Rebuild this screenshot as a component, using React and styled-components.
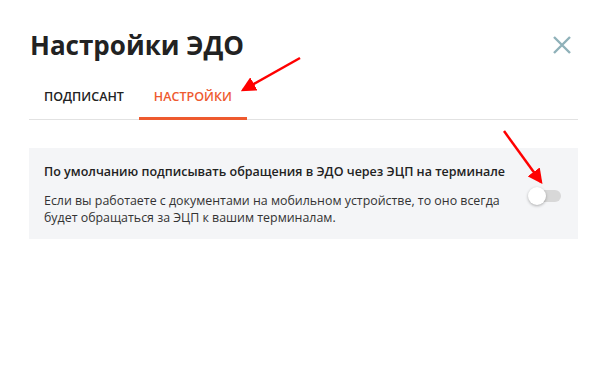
import React, { useState } from "react";
import styled, { createGlobalStyle } from "styled-components";

const colors = {
  TEXT: "#222222",
  ORANGE: "#EE5A2F",
  GREY_BG: "#F4F5F7",
  LINE: "#E2E2E2",
  CLOSE: "#8FB1B9",
  ARROW: "#FF0000",
};

const GlobalStyle = createGlobalStyle`
  html, body {
    margin: 0;
    padding: 0;
    background: #fff;
  }
  body {
    font-family: "Open Sans", "Noto Sans", sans-serif;
    color: ${colors.TEXT};
  }
`;

export default function App() {
  const [active, setActive] = useState("settings");
  const [checked, setChecked] = useState(false);

  return (
    <>
      <GlobalStyle />
      <Modal>
        <Header>
          <Title>Настройки ЭДО</Title>
          <Close aria-label="Закрыть">
            <svg width="20" height="20" viewBox="0 0 20 20">
              <path
                d="M2 2 L18 18 M18 2 L2 18"
                stroke={colors.CLOSE}
                strokeWidth="2.4"
                fill="none"
              />
            </svg>
          </Close>
        </Header>
        <Tabs>
          <Tab
            $active={active === "signer"}
            onClick={() => setActive("signer")}
          >
            Подписант
          </Tab>
          <Tab
            $active={active === "settings"}
            onClick={() => setActive("settings")}
          >
            Настройки
          </Tab>
        </Tabs>
        <Card>
          <CardText>
            <CardTitle>
              По умолчанию подписывать обращения в ЭДО через ЭЦП на терминале
            </CardTitle>
            <CardBody>
              Если вы работаете с документами на мобильном устройстве, то оно
              всегда будет обращаться за ЭЦП к вашим терминалам.
            </CardBody>
          </CardText>
          <Switch
            type="button"
            $on={checked}
            onClick={() => setChecked(!checked)}
          >
            <Knob $on={checked} />
          </Switch>
        </Card>
      </Modal>
      <Arrows width="605" height="377" viewBox="0 0 605 377">
        <defs>
          <marker
            id="head"
            markerWidth="6"
            markerHeight="6"
            refX="5"
            refY="3"
            orient="auto"
            markerUnits="strokeWidth"
          >
            <path d="M0 0 L6 3 L0 6 Z" fill={colors.ARROW} />
          </marker>
        </defs>
        <line
          x1="300"
          y1="58"
          x2="243"
          y2="90"
          stroke={colors.ARROW}
          strokeWidth="2.5"
          markerEnd="url(#head)"
        />
        <line
          x1="504"
          y1="131"
          x2="541"
          y2="182"
          stroke={colors.ARROW}
          strokeWidth="2.5"
          markerEnd="url(#head)"
        />
      </Arrows>
    </>
  );
}

const Modal = styled.div`
  padding: 24px 27px 0 29px;
`;

const Header = styled.div`
  display: flex;
  align-items: center;
  justify-content: space-between;
  height: 42px;
`;

const Title = styled.h1`
  margin: 0 0 0 1px;
  font-size: 26px;
  font-weight: 700;
  color: ${colors.TEXT};
`;

const Close = styled.button`
  display: flex;
  padding: 0;
  margin-right: 6px;
  border: none;
  background: none;
  cursor: pointer;
`;

const Tabs = styled.div`
  display: flex;
  margin-top: 16px;
  border-bottom: 1px solid ${colors.LINE};
`;

const Tab = styled.button`
  padding: 6px 15px 12px;
  margin-bottom: -1px;
  border: none;
  border-bottom: 3px solid
    ${(p) => (p.$active ? colors.ORANGE : "transparent")};
  background: none;
  font-family: "Open Sans", sans-serif;
  font-size: 12.5px;
  font-weight: 600;
  text-transform: uppercase;
  color: ${(p) => (p.$active ? colors.ORANGE : colors.TEXT)};
  cursor: pointer;
`;

const Card = styled.div`
  display: flex;
  align-items: center;
  gap: 16px;
  margin-top: 28px;
  padding: 15px 17px 13px 15px;
  background: ${colors.GREY_BG};
`;

const CardText = styled.div`
  flex: 1;
`;

const CardTitle = styled.div`
  font-size: 12.5px;
  font-weight: 600;
  line-height: 18px;
  margin-bottom: 11px;
  white-space: nowrap;
`;

const CardBody = styled.div`
  font-size: 12.4px;
  line-height: 17px;
  color: #333;
`;

const Switch = styled.button`
  position: relative;
  flex: none;
  width: 33px;
  height: 18px;
  margin-top: 2px;
  padding: 0;
  border: none;
  background: none;
  cursor: pointer;

  &::before {
    content: "";
    position: absolute;
    left: 5px;
    right: 0;
    top: 3px;
    height: 12px;
    border-radius: 6px;
    background: ${(p) => (p.$on ? "#F6A58D" : "#D8D8D8")};
  }
`;

const Knob = styled.span`
  position: absolute;
  top: 0;
  left: ${(p) => (p.$on ? "15px" : "0")};
  width: 18px;
  height: 18px;
  border-radius: 50%;
  background: ${(p) => (p.$on ? colors.ORANGE : "#fff")};
  box-shadow: 0 1px 3px rgba(0, 0, 0, 0.3);
`;

const Arrows = styled.svg`
  position: absolute;
  top: 0;
  left: 0;
  pointer-events: none;
`;
